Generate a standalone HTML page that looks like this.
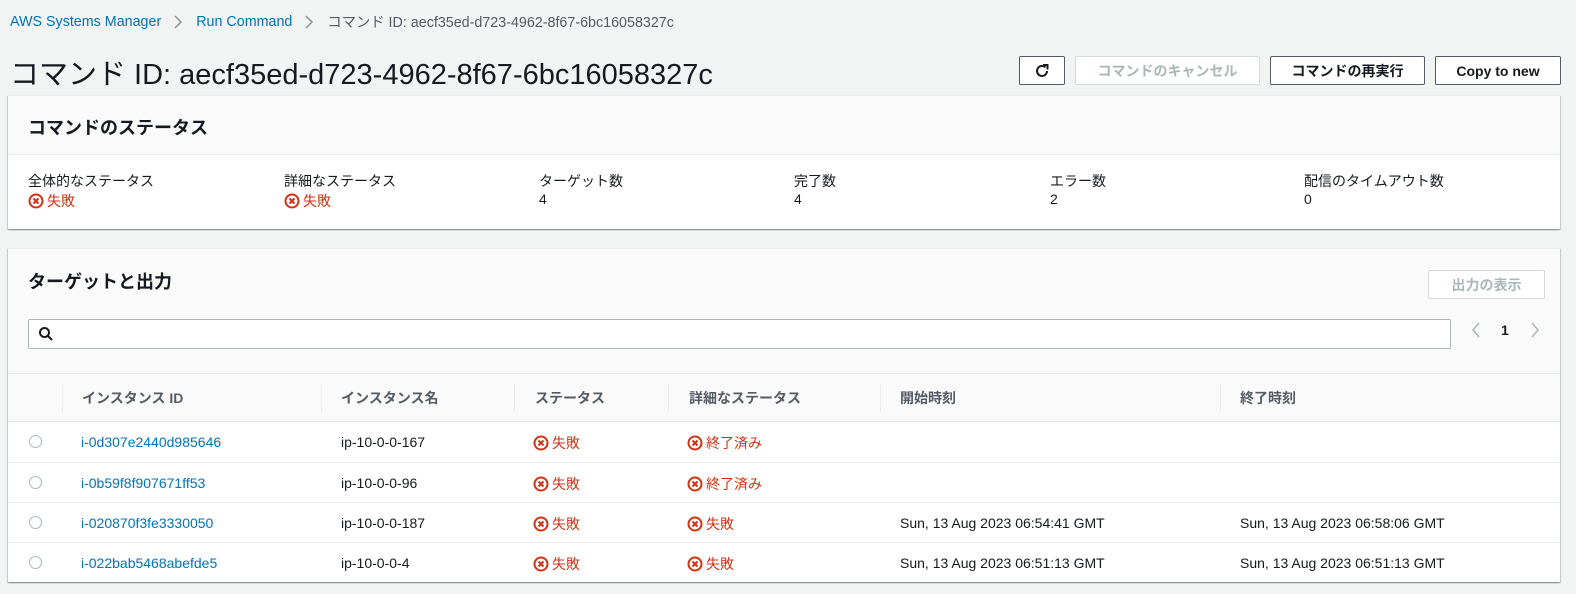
<!DOCTYPE html>
<html><head><meta charset="utf-8"><style>
*{box-sizing:border-box;margin:0;padding:0}
body{width:1576px;height:594px;background:#f2f3f3;font-family:"Liberation Sans","Noto Sans CJK JP",sans-serif;font-size:14px;color:#16191f;position:relative;overflow:hidden}
.abs{position:absolute}
.bc{top:11px;left:10px;font-size:14.3px;color:#545b64;white-space:nowrap;display:flex;align-items:center}
.bc a{color:#0073bb;text-decoration:none}
.bc svg{margin:0 13px}
h1{position:absolute;left:10px;top:51px;font-size:29px;font-weight:400;white-space:nowrap}
.btn{position:absolute;top:56px;height:29px;border:1px solid #545b64;background:#fff;border-radius:2px;font-weight:700;font-size:14px;display:flex;align-items:center;justify-content:center;color:#16191f}
.btn.dis{border-color:#d5dbdb;color:#aab7b8}
.panel{position:absolute;left:8px;width:1552px;background:#fff;box-shadow:0 1px 1px rgba(0,28,36,.3),1px 1px 1px rgba(0,28,36,.15),-1px 1px 1px rgba(0,28,36,.15);border-top:1px solid #eaeded}
.ph{background:#fafafa;border-bottom:1px solid #eaeded}
.ph h2{font-size:18px;font-weight:700}
.lbl{position:absolute;font-size:14px;color:#16191f;white-space:nowrap}
.err{color:#d13212;display:inline-flex;align-items:center;gap:3px}
.ic{width:16px;height:16px;display:inline-block}
.th{position:absolute;top:0;height:48px;display:flex;align-items:center;font-weight:700;color:#545b64}
.div{position:absolute;top:10px;width:1px;height:28px;background:#eaeded}
.row{position:absolute;left:0;width:1552px;height:40px;border-top:1px solid #eaeded}
.row>*{position:absolute;top:12px;white-space:nowrap}
.radio{width:13px;height:13px;border:1px solid #aab7b8;border-radius:50%;left:21px;top:13px!important}
.link{color:#0073bb}
</style></head><body>
<div class="abs bc"><a>AWS Systems Manager</a><svg width="9" height="16" viewBox="0 0 9 16"><path d="M1 2l6 6-6 6" fill="none" stroke="#879596" stroke-width="1.5"/></svg><a>Run Command</a><svg width="9" height="16" viewBox="0 0 9 16"><path d="M1 2l6 6-6 6" fill="none" stroke="#879596" stroke-width="1.5"/></svg>コマンド ID: aecf35ed-d723-4962-8f67-6bc16058327c</div>
<h1>コマンド ID: aecf35ed-d723-4962-8f67-6bc16058327c</h1>
<div class="btn" style="left:1019px;width:46px"><svg width="18" height="18" viewBox="0 0 18 18"><path d="M14 9a5 5 0 1 1-1.6-3.7" fill="none" stroke="#16191f" stroke-width="2"/><path d="M10 3h4.5v4.5" fill="none" stroke="#16191f" stroke-width="2"/></svg></div>
<div class="btn dis" style="left:1075px;width:185px">コマンドのキャンセル</div>
<div class="btn" style="left:1270px;width:155px">コマンドの再実行</div>
<div class="btn" style="left:1435px;width:126px">Copy to new</div>

<div class="panel" style="top:95px;height:134px">
 <div class="ph" style="height:59px;padding:18px 20px"><h2>コマンドのステータス</h2></div>
 <div class="lbl" style="left:20px;top:75px">全体的なステータス</div>
 <div class="lbl err" style="left:20px;top:95px"><svg class="ic" viewBox="0 0 16 16"><circle cx="8" cy="8" r="6.5" fill="none" stroke="#d13212" stroke-width="2"/><path d="M5.5 5.5l5 5M10.5 5.5l-5 5" stroke="#d13212" stroke-width="2"/></svg>失敗</div>
 <div class="lbl" style="left:276px;top:75px">詳細なステータス</div>
 <div class="lbl err" style="left:276px;top:95px"><svg class="ic" viewBox="0 0 16 16"><circle cx="8" cy="8" r="6.5" fill="none" stroke="#d13212" stroke-width="2"/><path d="M5.5 5.5l5 5M10.5 5.5l-5 5" stroke="#d13212" stroke-width="2"/></svg>失敗</div>
 <div class="lbl" style="left:531px;top:75px">ターゲット数</div><div class="lbl" style="left:531px;top:95px">4</div>
 <div class="lbl" style="left:786px;top:75px">完了数</div><div class="lbl" style="left:786px;top:95px">4</div>
 <div class="lbl" style="left:1042px;top:75px">エラー数</div><div class="lbl" style="left:1042px;top:95px">2</div>
 <div class="lbl" style="left:1296px;top:75px">配信のタイムアウト数</div><div class="lbl" style="left:1296px;top:95px">0</div>
</div>

<div class="panel" style="top:248px;height:334px">
 <div style="background:#fafafa;height:125px;border-bottom:1px solid #eaeded;position:relative">
  <h2 style="position:absolute;left:20px;top:19px;font-size:18px">ターゲットと出力</h2>
  <div class="btn dis" style="left:1420px;top:21px;width:117px;height:29px">出力の表示</div>
  <div style="position:absolute;left:20px;top:70px;width:1423px;height:30px;border:1px solid #aab7b8;background:#fff;border-radius:2px"><svg style="position:absolute;left:9px;top:6px" width="16" height="16" viewBox="0 0 16 16"><circle cx="6.5" cy="6.5" r="4.5" fill="none" stroke="#16191f" stroke-width="2"/><path d="M10 10l4 4" stroke="#16191f" stroke-width="2"/></svg></div>
  <svg style="position:absolute;left:1463px;top:72px" width="10" height="18" viewBox="0 0 10 18"><path d="M8 2L2 9l6 7" fill="none" stroke="#aab7b8" stroke-width="1.5"/></svg>
  <div style="position:absolute;left:1493px;top:73px;font-weight:700">1</div>
  <svg style="position:absolute;left:1522px;top:72px" width="10" height="18" viewBox="0 0 10 18"><path d="M2 2l6 7-6 7" fill="none" stroke="#aab7b8" stroke-width="1.5"/></svg>
 </div>
 <div style="position:absolute;top:125px;left:0;width:1552px;height:48px;background:#fafafa">
  <div class="div" style="left:54px"></div><div class="th" style="left:74px">インスタンス ID</div>
  <div class="div" style="left:313px"></div><div class="th" style="left:333px">インスタンス名</div>
  <div class="div" style="left:506px"></div><div class="th" style="left:527px">ステータス</div>
  <div class="div" style="left:660px"></div><div class="th" style="left:681px">詳細なステータス</div>
  <div class="div" style="left:872px"></div><div class="th" style="left:892px">開始時刻</div>
  <div class="div" style="left:1212px"></div><div class="th" style="left:1232px">終了時刻</div>
 </div>
 <div class="row" style="top:172px"><span class="radio"></span><span class="link" style="left:73px">i-0d307e2440d985646</span><span style="left:333px">ip-10-0-0-167</span><span class="err" style="left:525px;top:11px"><svg class="ic" viewBox="0 0 16 16"><circle cx="8" cy="8" r="6.5" fill="none" stroke="#d13212" stroke-width="2"/><path d="M5.5 5.5l5 5M10.5 5.5l-5 5" stroke="#d13212" stroke-width="2"/></svg>失敗</span><span class="err" style="left:679px;top:11px"><svg class="ic" viewBox="0 0 16 16"><circle cx="8" cy="8" r="6.5" fill="none" stroke="#d13212" stroke-width="2"/><path d="M5.5 5.5l5 5M10.5 5.5l-5 5" stroke="#d13212" stroke-width="2"/></svg>終了済み</span></div>
 <div class="row" style="top:213px"><span class="radio"></span><span class="link" style="left:73px">i-0b59f8f907671ff53</span><span style="left:333px">ip-10-0-0-96</span><span class="err" style="left:525px;top:11px"><svg class="ic" viewBox="0 0 16 16"><circle cx="8" cy="8" r="6.5" fill="none" stroke="#d13212" stroke-width="2"/><path d="M5.5 5.5l5 5M10.5 5.5l-5 5" stroke="#d13212" stroke-width="2"/></svg>失敗</span><span class="err" style="left:679px;top:11px"><svg class="ic" viewBox="0 0 16 16"><circle cx="8" cy="8" r="6.5" fill="none" stroke="#d13212" stroke-width="2"/><path d="M5.5 5.5l5 5M10.5 5.5l-5 5" stroke="#d13212" stroke-width="2"/></svg>終了済み</span></div>
 <div class="row" style="top:253px"><span class="radio"></span><span class="link" style="left:73px">i-020870f3fe3330050</span><span style="left:333px">ip-10-0-0-187</span><span class="err" style="left:525px;top:11px"><svg class="ic" viewBox="0 0 16 16"><circle cx="8" cy="8" r="6.5" fill="none" stroke="#d13212" stroke-width="2"/><path d="M5.5 5.5l5 5M10.5 5.5l-5 5" stroke="#d13212" stroke-width="2"/></svg>失敗</span><span class="err" style="left:679px;top:11px"><svg class="ic" viewBox="0 0 16 16"><circle cx="8" cy="8" r="6.5" fill="none" stroke="#d13212" stroke-width="2"/><path d="M5.5 5.5l5 5M10.5 5.5l-5 5" stroke="#d13212" stroke-width="2"/></svg>失敗</span><span style="left:892px">Sun, 13 Aug 2023 06:54:41 GMT</span><span style="left:1232px">Sun, 13 Aug 2023 06:58:06 GMT</span></div>
 <div class="row" style="top:293px"><span class="radio"></span><span class="link" style="left:73px">i-022bab5468abefde5</span><span style="left:333px">ip-10-0-0-4</span><span class="err" style="left:525px;top:11px"><svg class="ic" viewBox="0 0 16 16"><circle cx="8" cy="8" r="6.5" fill="none" stroke="#d13212" stroke-width="2"/><path d="M5.5 5.5l5 5M10.5 5.5l-5 5" stroke="#d13212" stroke-width="2"/></svg>失敗</span><span class="err" style="left:679px;top:11px"><svg class="ic" viewBox="0 0 16 16"><circle cx="8" cy="8" r="6.5" fill="none" stroke="#d13212" stroke-width="2"/><path d="M5.5 5.5l5 5M10.5 5.5l-5 5" stroke="#d13212" stroke-width="2"/></svg>失敗</span><span style="left:892px">Sun, 13 Aug 2023 06:51:13 GMT</span><span style="left:1232px">Sun, 13 Aug 2023 06:51:13 GMT</span></div>
</div>
</body></html>
